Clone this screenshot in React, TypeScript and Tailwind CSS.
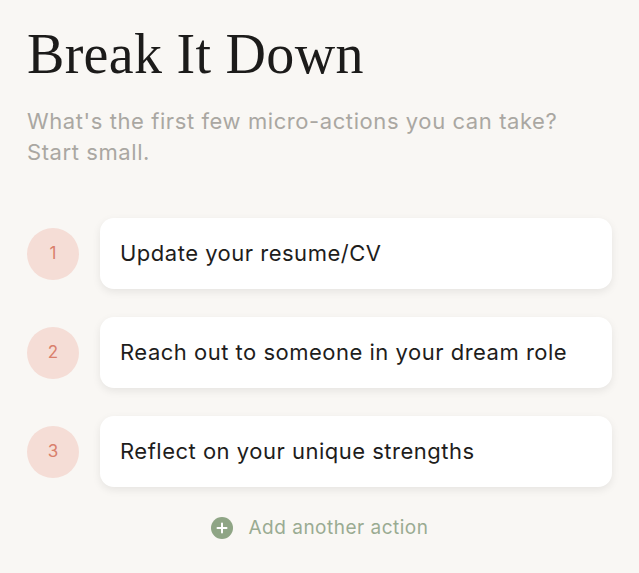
import React from 'react';

const actions = [
  'Update your resume/CV',
  'Reach out to someone in your dream role',
  'Reflect on your unique strengths',
];

export default function App() {
  return (
    <div className="min-h-screen w-full bg-[#f9f7f4] px-[27px] pt-[22px] font-['Inter',sans-serif]">
      <h1 className="font-['Liberation_Serif',serif] text-[56px] leading-[64px] tracking-[0.3px] text-[#1c1b1a]">
        Break It Down
      </h1>
      <p className="mt-[20px] text-[22px] leading-[31px] tracking-[0.58px] text-[#aaa7a2]">
        What's the first few micro-actions you can take?
        <br />
        Start small.
      </p>

      <div className="mt-[50px] flex flex-col gap-[28px]">
        {actions.map((a, i) => (
          <div key={i} className="flex items-center gap-[21px]">
            <div className="flex h-[52px] w-[52px] shrink-0 items-center justify-center rounded-full bg-[#f5ddd6] text-[17px] text-[#d9806c]">
              {i + 1}
            </div>
            <div className="flex h-[71px] flex-1 items-center rounded-[14px] bg-white px-[20px] text-[22px] tracking-[0.5px] text-[#1e1d1c] shadow-[0_3px_8px_rgba(0,0,0,0.08)]">
              {a}
            </div>
          </div>
        ))}
      </div>

      <div className="mt-[27px] flex items-center justify-center gap-[16px]">
        <svg width="22" height="22" viewBox="0 0 22 22">
          <circle cx="11" cy="11" r="11" fill="#8fa585" />
          <path d="M11 6.5v9M6.5 11h9" stroke="#fff" strokeWidth="2" strokeLinecap="round" />
        </svg>
        <span className="text-[19px] tracking-[0.5px] text-[#9aab92]">Add another action</span>
      </div>
    </div>
  );
}
